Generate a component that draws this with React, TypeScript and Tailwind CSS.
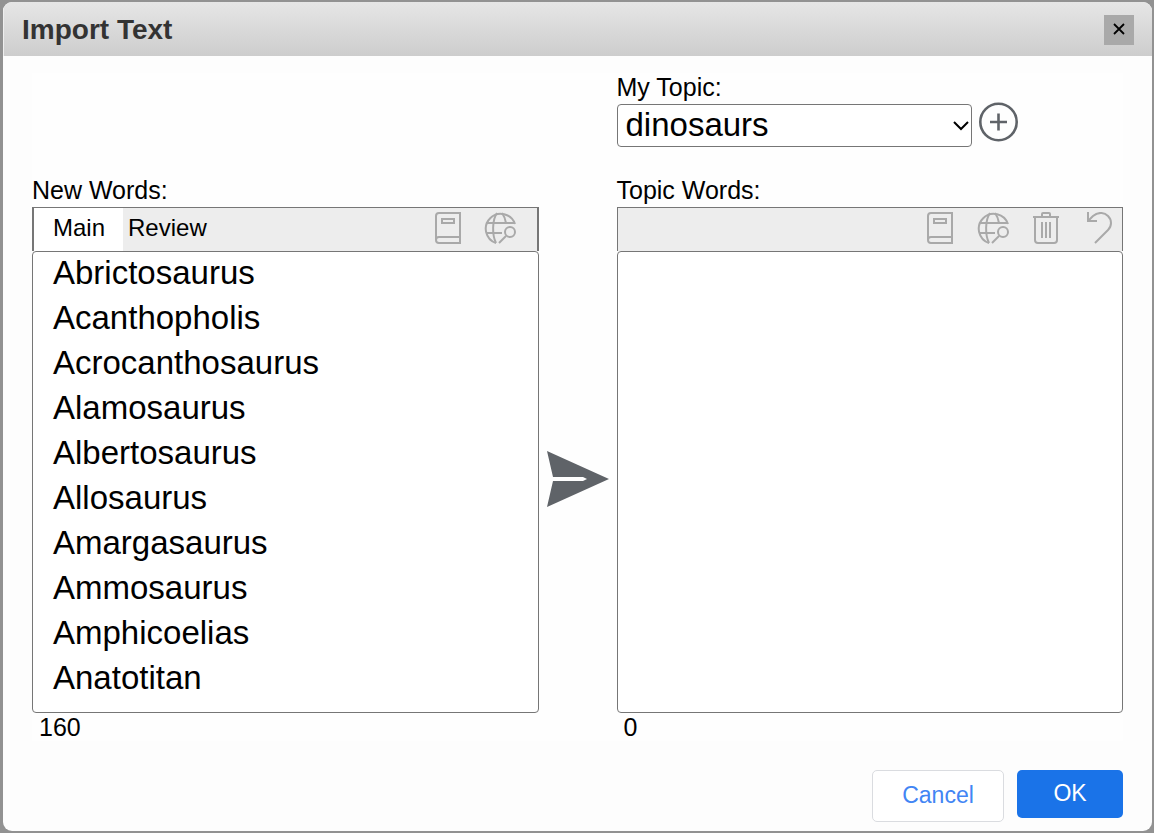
import { useState } from "react";
import type { ReactNode } from "react";

const newWords = [
  "Abrictosaurus",
  "Acanthopholis",
  "Acrocanthosaurus",
  "Alamosaurus",
  "Albertosaurus",
  "Allosaurus",
  "Amargasaurus",
  "Ammosaurus",
  "Amphicoelias",
  "Anatotitan",
];

function BookIcon() {
  return (
    <svg viewBox="0 0 32 32" className="h-8 w-8" fill="none" stroke="currentColor" strokeWidth="2">
      <path d="M28 25V1H7Q4 1 4 4V28Q4 31 7 31H28V25H7Q4 25 4 28" />
      <path d="M10 7H22V11H10Z" />
    </svg>
  );
}

function GlobeSearchIcon() {
  return (
    <svg viewBox="0 0 32 32" className="h-8 w-8" fill="none" stroke="currentColor" strokeWidth="2">
      <path d="M31 12A15 15 0 1 0 12 31" />
      <path d="M2 11H31M2 21H18" />
      <path d="M13 1C8 8 8 23 12 31M18 1Q21 5 22 11" />
      <circle cx="26" cy="20" r="5" />
      <path d="M22 24L15 31" />
    </svg>
  );
}

function TrashIcon() {
  return (
    <svg viewBox="0 0 32 32" className="h-8 w-8" fill="none" stroke="currentColor" strokeWidth="2">
      <path d="M3 5H29M12 5V2Q12 1 13 1H19Q20 1 20 2V5" />
      <path d="M5 5V28Q5 31 8 31H24Q27 31 27 28V5" />
      <path d="M12 10V26M16 10V26M20 10V26" />
    </svg>
  );
}

function UndoIcon() {
  return (
    <svg viewBox="0 0 32 32" className="h-8 w-8" fill="none" stroke="currentColor" strokeWidth="2">
      <path d="M5 0V9H14" />
      <path d="M5 9L10 4C16 -1 22 1 25 4C29 8 29 14 25 18L12 31" />
    </svg>
  );
}

function ToolButton({ label, children }: { label: string; children: ReactNode }) {
  return (
    <button type="button" aria-label={label} className="h-8 w-8 text-[#a9a9a9]">
      {children}
    </button>
  );
}

function WordList({ id, words }: { id: string; words: string[] }) {
  return (
    <select
      id={id}
      multiple
      className="block h-[462px] w-full appearance-none overflow-hidden rounded-[4px] border border-[#767676] bg-white pt-0.5 text-[33px] text-black outline-none"
    >
      {words.map((word) => (
        <option key={word} className="h-[45px] py-0 pr-0 pl-5 leading-[38px]">
          {word}
        </option>
      ))}
    </select>
  );
}

export default function App() {
  const [tab, setTab] = useState("Main");

  return (
    <div className="min-h-screen bg-[#929292] pt-[2px] pr-[2px] pb-[2px] pl-[3px] font-['Liberation_Sans',Arial,sans-serif] text-black">
      <div role="dialog" aria-labelledby="title" className="overflow-hidden rounded-[9px] bg-[#fdfdfd]">
        {/* Title bar */}
        <header className="flex h-[54px] items-center justify-between border-l border-[#eeeeee] bg-linear-to-b from-[#e6e6e6] to-[#cdcdcd] px-[18px] pt-0.5">
          <h1 id="title" className="text-[28px] leading-8 font-bold text-[#333333]">
            Import Text
          </h1>
          <button
            type="button"
            aria-label="Close"
            className="flex h-[30px] w-[30px] justify-center bg-[#a9a9a9] pt-2"
          >
            <svg viewBox="0 0 12 12" className="h-3 w-3" fill="none" stroke="#000" strokeWidth="1.8">
              <path d="M1 1L11 11M11 1L1 11" />
            </svg>
          </button>
        </header>

        <div className="px-[29px] pt-[17px] pb-[9px]">
          <div className="grid grid-cols-[1fr_78px_1fr] bg-[#fefefe]">
            {/* Topic picker */}
            <div className="col-start-3 pb-[29px]">
              <label htmlFor="topic" className="block pb-[3px] text-[25px] leading-7">
                My Topic:
              </label>
              <div className="flex items-start gap-[7px]">
                <div className="relative w-[355px]">
                  <select
                    id="topic"
                    className="block h-[43px] w-full appearance-none rounded-[4px] border border-[#767676] bg-white pr-8 pb-0.5 pl-2 text-[33px] leading-[38px] outline-none"
                  >
                    <option>dinosaurs</option>
                  </select>
                  <svg
                    viewBox="0 0 16 10"
                    className="pointer-events-none absolute top-[17px] right-[3px] h-[10px] w-4"
                    fill="none"
                    stroke="#000"
                    strokeWidth="2"
                  >
                    <path d="M1 1L8 8L15 1" />
                  </svg>
                </div>
                <button type="button" aria-label="Add topic" className="text-[#5f6368]">
                  <svg viewBox="0 2 39 39" className="h-[39px] w-[39px] overflow-visible" fill="none" stroke="currentColor" strokeWidth="2.6">
                    <circle cx="19.5" cy="20" r="18.2" />
                    <path d="M11 20H28M19.5 11.5V28.5" />
                  </svg>
                </button>
              </div>
            </div>

            {/* New words */}
            <div className="col-start-1">
              <label htmlFor="new-words" className="block pb-[3px] text-[25px] leading-7">
                New Words:
              </label>
              <div className="flex h-11 items-center justify-between border-x-2 border-t border-[#767676] bg-[#ededed] pr-[21px]">
                <div role="tablist" className="flex h-full text-[24px] leading-7">
                  <button
                    type="button"
                    role="tab"
                    aria-selected={tab === "Main"}
                    onClick={() => setTab("Main")}
                    className="bg-white pr-[18px] pb-[3px] pl-[19px]"
                  >
                    Main
                  </button>
                  <button
                    type="button"
                    role="tab"
                    aria-selected={tab === "Review"}
                    onClick={() => setTab("Review")}
                    className="px-[5px] pb-[3px]"
                  >
                    Review
                  </button>
                </div>
                <div className="flex gap-5 pb-[3px]">
                  <ToolButton label="Dictionary">
                    <BookIcon />
                  </ToolButton>
                  <ToolButton label="Search the web">
                    <GlobeSearchIcon />
                  </ToolButton>
                </div>
              </div>
              <WordList id="new-words" words={newWords} />
              <p className="pl-[7px] text-[25px] leading-7">160</p>
            </div>

            <div className="flex items-center justify-center pt-10">
              <button type="button" aria-label="Add to topic">
                <svg viewBox="0 0 62 56" className="h-14 w-[62px]" fill="#5f6368">
                  <path d="M0 0L62 28L0 56L6 30H36L40 28L36 26H6Z" />
                </svg>
              </button>
            </div>

            {/* Topic words */}
            <div>
              <label htmlFor="topic-words" className="block pb-[3px] text-[25px] leading-7">
                Topic Words:
              </label>
              <div className="flex h-11 items-center justify-end gap-[21px] border-x border-t border-[#767676] bg-[#ededed] pr-[7px] pb-[3px]">
                <ToolButton label="Dictionary">
                  <BookIcon />
                </ToolButton>
                <ToolButton label="Search the web">
                  <GlobeSearchIcon />
                </ToolButton>
                <ToolButton label="Delete">
                  <TrashIcon />
                </ToolButton>
                <ToolButton label="Undo">
                  <UndoIcon />
                </ToolButton>
              </div>
              <WordList id="topic-words" words={[]} />
              <p className="pl-[7px] text-[25px] leading-7">0</p>
            </div>
          </div>

          {/* Actions */}
          <div className="mt-[29px] flex items-start justify-end gap-[13px] text-[23px] leading-7">
            <button
              type="button"
              className="h-[52px] w-[132px] rounded-[5px] border border-[#dadce0] bg-white pb-0.5 text-[#4285f4]"
            >
              Cancel
            </button>
            <button type="button" className="h-12 w-[106px] rounded-[5px] bg-[#1a73e8] pb-0.5 text-white">
              OK
            </button>
          </div>
        </div>
      </div>
    </div>
  );
}
